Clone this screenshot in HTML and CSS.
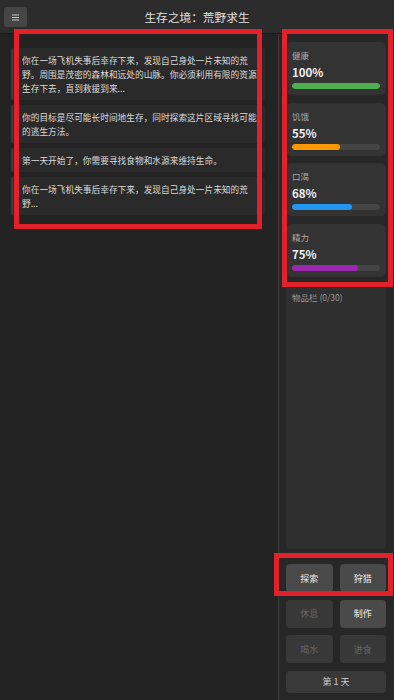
FILE: index.html
```html
<!DOCTYPE html>
<html lang="zh-CN">
<head>
  <meta charset="UTF-8" />
  <meta name="viewport" content="width=device-width, initial-scale=1.0" />
  <title>生存之境：荒野求生</title>
  <link rel="stylesheet" href="styles.css">
</head>
<body>
  <header class="topbar">
    <button class="menu-btn" aria-label="菜单">
      <svg width="7" height="7" viewBox="0 0 7 7">
        <rect x="0" y="0.5" width="7" height="1" fill="#c8c8c8" />
        <rect x="0" y="3" width="7" height="1" fill="#c8c8c8" />
        <rect x="0" y="5.5" width="7" height="1" fill="#c8c8c8" />
      </svg>
    </button>
    <h1 class="title">生存之境：荒野求生</h1>
  </header>

  <main class="game">
    <section class="log">
      <p class="entry">你在一场飞机失事后幸存下来，发现自己身处一片未知的荒野。周围是茂密的森林和远处的山脉。你必须利用有限的资源生存下去，直到救援到来...</p>
      <p class="entry">你的目标是尽可能长时间地生存，同时探索这片区域寻找可能的逃生方法。</p>
      <p class="entry">第一天开始了，你需要寻找食物和水源来维持生命。</p>
      <p class="entry">你在一场飞机失事后幸存下来，发现自己身处一片未知的荒野...</p>
    </section>

    <aside class="sidebar">
      <div class="stats">
        <div class="stat">
          <div class="stat-label">健康</div>
          <div class="stat-value">100%</div>
          <div class="bar"><div class="fill health" style="width: 100%"></div></div>
        </div>
        <div class="stat">
          <div class="stat-label">饥饿</div>
          <div class="stat-value">55%</div>
          <div class="bar"><div class="fill hunger" style="width: 55%"></div></div>
        </div>
        <div class="stat">
          <div class="stat-label">口渴</div>
          <div class="stat-value">68%</div>
          <div class="bar"><div class="fill thirst" style="width: 68%"></div></div>
        </div>
        <div class="stat">
          <div class="stat-label">精力</div>
          <div class="stat-value">75%</div>
          <div class="bar"><div class="fill energy" style="width: 75%"></div></div>
        </div>
      </div>

      <div class="inventory">
        <div class="inv-title">物品栏 (0/30)</div>
      </div>

      <div class="actions">
        <button class="act">探索</button>
        <button class="act">狩猎</button>
        <button class="act" disabled>休息</button>
        <button class="act">制作</button>
        <button class="act" disabled>喝水</button>
        <button class="act" disabled>进食</button>
      </div>

      <div class="day">第 1 天</div>
    </aside>
  </main>

  <div class="mark mark-log"></div>
  <div class="mark mark-stats"></div>
  <div class="mark mark-actions"></div>
</body>
</html>
```

FILE: styles.css
```css
* {
  box-sizing: border-box;
}
body {
  margin: 0;
  height: 700px;
  overflow: hidden;
  background: #232323;
  color: #ddd;
  font-family: "Noto Sans CJK SC", "Noto Sans", sans-serif;
  position: relative;
}
.topbar {
  height: 34px;
  background: #2c2c2c;
  border-bottom: 1px solid #1a1a1a;
  display: flex;
  align-items: center;
  justify-content: center;
  position: relative;
}
.menu-btn {
  position: absolute;
  left: 4px;
  top: 7px;
  width: 23px;
  height: 20px;
  border: none;
  border-radius: 3px;
  background: #454545;
  padding: 0;
  display: flex;
  align-items: center;
  justify-content: center;
}
.title {
  margin: 0;
  font-size: 11.7px;
  font-weight: 400;
  color: #e0e0e0;
  line-height: 16px;
}
.game {
  display: flex;
  height: 666px;
}
.log {
  width: 279px;
  padding: 14px 13px 0 11px;
  border-right: 1px solid #3a3a3a;
  display: flex;
  flex-direction: column;
  gap: 5px;
}
.entry {
  margin: 0;
  background: #2a2a2a;
  border-left: 2px solid #3d3d3d;
  border-radius: 2px;
  padding: 6px 6px 4px 9px;
  font-size: 8.7px;
  line-height: 14px;
  color: #dadada;
  overflow: hidden;
}
.sidebar {
  flex: 1;
  background: #272727;
  padding: 8px 8px 7px 7px;
  display: flex;
  flex-direction: column;
}
.stats {
  display: flex;
  flex-direction: column;
  gap: 7.7px;
}
.stat {
  background: #333;
  border-radius: 5px;
  padding: 8px 6px 6px 6px;
}
.stat-label {
  font-size: 8.5px;
  line-height: 11px;
  color: #a8a8a8;
}
.stat-value {
  margin-top: 3px;
  font-size: 11.5px;
  line-height: 16px;
  font-weight: 700;
  color: #f0f0f0;
}
.bar {
  margin-top: 3px;
  height: 6px;
  background: #454545;
  border-radius: 3px;
  overflow: hidden;
}
.fill {
  height: 100%;
  border-radius: 3px;
}
.health { background: #4caf50; }
.hunger { background: #ff9800; }
.thirst { background: #2196f3; }
.energy { background: #9c27b0; }
.inventory {
  flex: 1;
  margin-top: 6px;
  background: #2f2f2f;
  border-radius: 4px;
  padding: 8px 6px;
}
.inv-title {
  font-size: 8.5px;
  line-height: 12px;
  color: #9a9a9a;
}
.actions {
  margin-top: 15px;
  display: grid;
  grid-template-columns: 1fr 1fr;
  grid-auto-rows: 28px;
  column-gap: 7px;
  row-gap: 7.5px;
}
.act {
  border: none;
  border-radius: 4px;
  background: #4a4a4a;
  color: #ececec;
  font-family: inherit;
  font-size: 9px;
  padding: 0;
}
.act:disabled {
  background: #383838;
  color: #666;
}
.day {
  margin-top: 8px;
  height: 22px;
  background: #393939;
  border-radius: 4px;
  font-size: 9px;
  line-height: 22px;
  text-align: center;
  color: #cfcfcf;
}
.mark {
  position: absolute;
  border: 5px solid #e3212b;
  pointer-events: none;
}
.mark-log {
  left: 14px;
  top: 29px;
  width: 248px;
  height: 200px;
}
.mark-stats {
  left: 282px;
  top: 29px;
  width: 111px;
  height: 258px;
}
.mark-actions {
  left: 274px;
  top: 553px;
  width: 119px;
  height: 43px;
}
```
